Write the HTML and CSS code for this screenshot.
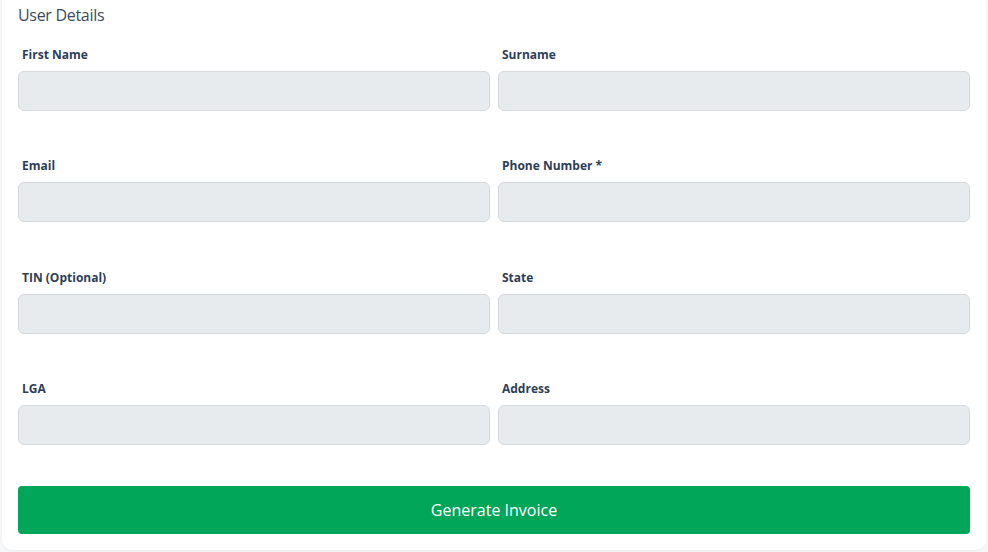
FILE: index.html
```html
<!DOCTYPE html>
<html lang="en">
<head>
<meta charset="utf-8">
<title>User Details</title>
<link rel="stylesheet" href="styles.css">
</head>
<body>
<div class="card">
  <h2 class="card-title">User Details</h2>
  <form class="form-grid">
    <div class="field"><label class="label">First Name</label><input class="input" type="text"></div>
    <div class="field"><label class="label">Surname</label><input class="input" type="text"></div>
    <div class="field"><label class="label">Email</label><input class="input" type="text"></div>
    <div class="field"><label class="label">Phone Number *</label><input class="input" type="text"></div>
    <div class="field"><label class="label">TIN (Optional)</label><input class="input" type="text"></div>
    <div class="field"><label class="label">State</label><input class="input" type="text"></div>
    <div class="field"><label class="label">LGA</label><input class="input" type="text"></div>
    <div class="field"><label class="label">Address</label><input class="input" type="text"></div>
  </form>
  <button class="btn-primary" type="button">Generate Invoice</button>
</div>
</body>
</html>
```
FILE: styles.css
```css
* { box-sizing: border-box; }
html, body { margin: 0; padding: 0; }
body {
  background: #f6f7f8;
  font-family: "Open Sans", "Noto Sans", Arial, sans-serif;
  width: 988px;
  height: 552px;
  overflow: hidden;
}
.card {
  margin: 0 2px;
  background: #ffffff;
  border-radius: 0 0 10px 10px;
  padding: 3px 16px 16px 16px;
  box-shadow: 0 1px 3px rgba(0,0,0,0.04);
}
.card-title {
  margin: 0 0 18px 0;
  font-size: 16px;
  line-height: 24px;
  font-weight: 400;
  color: #3b4a5e;
  letter-spacing: -0.3px;
}
.form-grid {
  display: grid;
  grid-template-columns: 1fr 1fr;
  column-gap: 8px;
  row-gap: 45.33px;
}
.field {
  display: flex;
  flex-direction: column;
}
.label {
  font-size: 12px;
  line-height: 18px;
  font-weight: 700;
  color: #2d3e58;
  margin: 1px 4px 7px 4px;
}
.input {
  height: 40px;
  width: 100%;
  background: #e8ebee;
  border: 1px solid #d5d9dd;
  border-radius: 6px;
  outline: none;
  font: inherit;
}
.btn-primary {
  display: block;
  width: 100%;
  height: 48px;
  margin-top: 41px;
  background: #02a659;
  color: #ffffff;
  border: none;
  border-radius: 4px;
  font-family: inherit;
  font-size: 16px;
  font-weight: 400;
}
```
